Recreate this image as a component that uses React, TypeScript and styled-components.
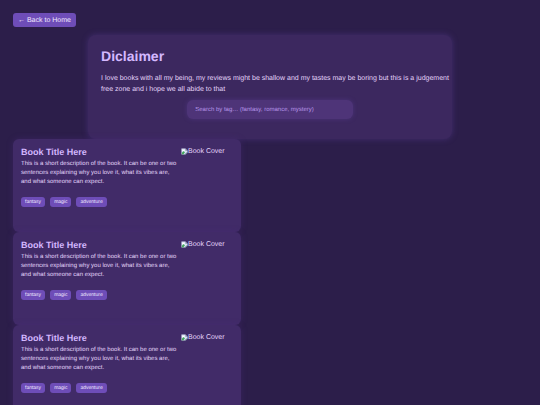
import React from "react";
import styled, { createGlobalStyle } from "styled-components";

const GlobalStyle = createGlobalStyle`
  * { box-sizing: border-box; }
  html { overflow-x: hidden; background: #2c1e4a; scrollbar-width: none; }
  body {
    margin: 0;
    padding: 13px;
    color: #e4d4fa;
    font-family: "Liberation Sans", Arial, sans-serif;
    text-rendering: geometricPrecision;
  }
  h1, h2, p, ul { margin: 0; padding: 0; }
`;

const BackLink = styled.a`
  display: block;
  width: fit-content;
  padding: 1px 5px 0;
  border-radius: 3px;
  background: #6e4db8;
  color: #f1e8ff;
  font-size: 7px;
  line-height: 13px;
  text-decoration: none;
`;

const Intro = styled.section`
  width: 70.8%;
  margin: 8px auto 0;
  padding: 13px 2px 20px 13px;
  border-radius: 8px;
  background: #3c285f;
  box-shadow: 0 0 6px rgba(110, 77, 184, 0.35);
`;

const Heading = styled.h1`
  color: #d4b8ff;
  font-size: 14px;
  line-height: 16px;
`;

const Statement = styled.p`
  margin-top: 9px;
  font-size: 7px;
  line-height: 11px;
`;

const SearchRow = styled.div`
  display: flex;
  justify-content: center;
  margin-top: 5px;
  padding-right: 11px;
`;

const Search = styled.input`
  width: 49%;
  height: 19px;
  padding: 1px 8px 0;
  border: 0;
  border-radius: 6px;
  outline: 0;
  background: #4e3478;
  box-shadow: 0 0 5px rgba(110, 77, 184, 0.3);
  color: #e4d4fa;
  font: 6px "Liberation Sans", Arial, sans-serif;
  text-rendering: inherit;
  &::placeholder { color: #b794e8; opacity: 1; }
`;

const Books = styled.main`
  width: 44.3%;
`;

const Card = styled.article`
  display: grid;
  grid-template-columns: 158px 1fr;
  column-gap: 2px;
  min-height: 93px;
  padding: 8px;
  border-radius: 6px;
  background: #412b68;
  box-shadow: 0 0 6px rgba(75, 45, 125, 0.4);
`;

const Title = styled.h2`
  color: #d4b8ff;
  font-size: 9px;
  line-height: 11px;
`;

const Description = styled.p`
  margin-top: 2px;
  font-size: 6px;
  line-height: 9px;
`;

const Tags = styled.ul`
  display: flex;
  gap: 5px;
  margin-top: 10px;
  list-style: none;
`;

const Tag = styled.li`
  padding: 0 4px;
  border-radius: 3px;
  background: #6e4db8;
  color: #f1e8ff;
  font-size: 5px;
  line-height: 10px;
`;

const Cover = styled.div`
  display: flex;
  align-items: center;
  height: 9px;
  font-size: 7px;
  line-height: 9px;
`;

const CoverIcon = () => (
  <svg width="7" height="7" viewBox="0 0 16 16" aria-hidden="true">
    <path d="M1 1h9l5 5v4l-5 5H1z" fill="#dce4f5" />
    <path d="M10 1l5 5h-5z" fill="#8393a8" />
    <path d="M2 14V11l4-4 3 3-4 5z" fill="#43a65b" />
    <path d="M3 4h5v3H3z" fill="#fff" />
    <path d="M8 15l7-7v3l-4 4z" fill="#667b8d" />
  </svg>
);

const book = {
  title: "Book Title Here",
  description:
    "This is a short description of the book. It can be one or two sentences explaining why you love it, what its vibes are, and what someone can expect.",
  tags: ["fantasy", "magic", "adventure"],
};

const books = [1, 2, 3].map((id) => ({ id, ...book }));

export default function App() {
  return (
    <>
      <GlobalStyle />
      <BackLink href="#home">← Back to Home</BackLink>
      <Intro>
        <Heading>Diclaimer</Heading>
        <Statement>
          I love books with all my being, my reviews might be shallow and my
          tastes may be boring but this is a judgement free zone and i hope we
          all abide to that
        </Statement>
        <SearchRow>
          <Search
            type="text"
            aria-label="Search by tag"
            placeholder="Search by tag… (fantasy, romance, mystery)"
          />
        </SearchRow>
      </Intro>
      <Books>
        {books.map(({ id, title, description, tags }) => (
          <Card key={id}>
            <div>
              <Title>{title}</Title>
              <Description>{description}</Description>
              <Tags>
                {tags.map((tag) => (
                  <Tag key={tag}>{tag}</Tag>
                ))}
              </Tags>
            </div>
            <Cover>
              <CoverIcon />
              Book Cover
            </Cover>
          </Card>
        ))}
      </Books>
    </>
  );
}
